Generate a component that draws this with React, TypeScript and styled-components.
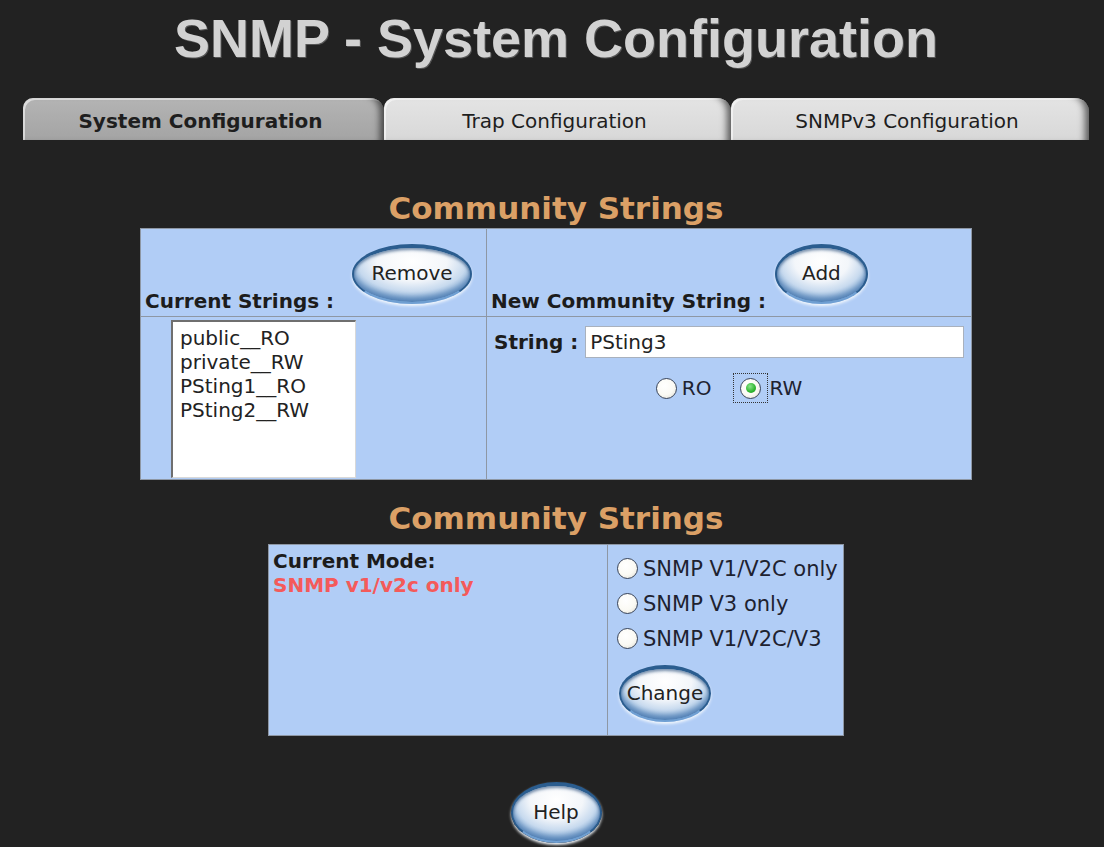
import React from "react";
import styled, { createGlobalStyle } from "styled-components";

const GlobalStyle = createGlobalStyle`
  html, body {
    margin: 0;
    padding: 0;
    background: #222222;
  }
  body {
    font-family: "DejaVu Sans", Verdana, sans-serif;
    color: #1c1c1c;
  }
`;

const Page = styled.div`
  width: 1104px;
  min-height: 847px;
  box-sizing: border-box;
  padding-left: 8px;
  display: flex;
  flex-direction: column;
  align-items: center;
`;

const Title = styled.h1`
  margin: 0;
  height: 98px;
  box-sizing: border-box;
  padding-top: 11px;
  font-family: "Liberation Sans", Arial, sans-serif;
  font-size: 54px;
  line-height: 54px;
  font-weight: bold;
  color: #d2d2d2;
  text-shadow: 1px 1px 0 #555;
`;

const TabBar = styled.div`
  display: flex;
  width: 1066px;
  height: 42px;
`;

const Tab = styled.div<{ $w: number; $active?: boolean }>`
  width: ${(p) => p.$w}px;
  height: 42px;
  display: flex;
  align-items: center;
  justify-content: center;
  box-sizing: border-box;
  padding: 4px 6px 0 0;
  border-top-left-radius: 10px;
  border-top-right-radius: 14px;
  background: ${(p) =>
    p.$active
      ? "linear-gradient(#b4b4b4, #a4a4a4)"
      : "linear-gradient(#e4e4e4, #d8d8d8)"};
  box-shadow: inset -9px 0 7px -5px rgba(0, 0, 0, 0.6),
    inset 2px 2px 0 rgba(255, 255, 255, 0.55);
  font-size: 20px;
  font-weight: ${(p) => (p.$active ? "bold" : "normal")};
  color: #1e1e1e;
`;

const Heading = styled.h2<{ $top: number; $bottom: number }>`
  margin: ${(p) => p.$top}px 0 ${(p) => p.$bottom}px;
  font-size: 31px;
  line-height: 34px;
  font-weight: bold;
  color: #dba066;
`;

const Grid = styled.div<{ $cols: string; $rows: string }>`
  display: grid;
  grid-template-columns: ${(p) => p.$cols};
  grid-template-rows: ${(p) => p.$rows};
  gap: 1px;
  padding: 1px;
  background: #8e97a4;
`;

const Cell = styled.div`
  background: #b1cdf6;
  box-sizing: border-box;
`;

const HeadCell = styled(Cell)<{ $gap: number }>`
  display: flex;
  align-items: flex-end;
  gap: ${(p) => p.$gap}px;
  padding: 0 4px 3px;
`;

const Label = styled.span`
  font-size: 20px;
  line-height: 24px;
  font-weight: bold;
  white-space: nowrap;
`;

const Pill = styled.button<{ $w: number; $h: number; $lift?: number }>`
  width: ${(p) => p.$w}px;
  height: ${(p) => p.$h}px;
  margin-bottom: ${(p) => p.$lift ?? 0}px;
  flex-shrink: 0;
  padding: 0 0 4px;
  border-radius: 50%;
  border: 2px solid #2b5d8f;
  border-top-width: 4px;
  border-bottom-color: #6f9fd2;
  background: radial-gradient(
    ellipse 72% 85% at 50% 25%,
    #ffffff 0%,
    #f3f6fa 42%,
    #c6d9ee 66%,
    #5189c4 100%
  );
  box-shadow: 0 2px 3px #f2f7fc, inset 0 2px 3px rgba(20, 60, 110, 0.55),
    inset 0 -5px 5px rgba(40, 90, 150, 0.45);
  font-family: "DejaVu Sans", Verdana, sans-serif;
  font-size: 20px;
  color: #222;
  cursor: pointer;
`;

const ListCell = styled(Cell)`
  padding: 3px 0 0 30px;
`;

const ListBox = styled.div`
  width: 185px;
  height: 158px;
  box-sizing: border-box;
  background: #fff;
  border-top: 2px solid #6f6f6f;
  border-left: 2px solid #6f6f6f;
  border-right: 1px solid #d8d8d8;
  border-bottom: 1px solid #d8d8d8;
  padding: 4px 0 0 7px;
`;

const ListItem = styled.div`
  font-size: 20px;
  line-height: 24px;
  color: #222;
  white-space: nowrap;
`;

const FormCell = styled(Cell)`
  padding: 9px 7px 0;
`;

const StringRow = styled.div`
  display: flex;
  align-items: center;
  gap: 7px;
`;

const TextBox = styled.input`
  flex: 1;
  height: 32px;
  box-sizing: border-box;
  border: 1px solid #a9b1bd;
  background: #fff;
  padding: 0 4px;
  font-family: "DejaVu Sans", Verdana, sans-serif;
  font-size: 20px;
  color: #222;
  outline: none;
`;

const RadioRow = styled.div`
  display: flex;
  justify-content: center;
  align-items: center;
  gap: 22px;
  margin-top: 15px;
  height: 30px;
`;

const Option = styled.label<{ $h?: number; $fs?: number }>`
  display: flex;
  align-items: center;
  height: ${(p) => p.$h ?? 30}px;
  font-size: ${(p) => p.$fs ?? 20}px;
  color: #1e2230;
  white-space: nowrap;
`;

const DotFrame = styled.span<{ $focus?: boolean }>`
  display: inline-flex;
  align-items: center;
  justify-content: center;
  box-sizing: border-box;
  height: 30px;
  padding: ${(p) => (p.$focus ? "0 6px" : "0")};
  margin-right: ${(p) => (p.$focus ? 1 : 5)}px;
  border-style: dotted;
  border-color: ${(p) => (p.$focus ? "#333" : "transparent")};
  border-width: ${(p) => (p.$focus ? 1 : 0)}px;
`;

const Dot = styled.span<{ $on?: boolean }>`
  width: 21px;
  height: 21px;
  box-sizing: border-box;
  border-radius: 50%;
  border: 1.5px solid #3a4458;
  background: radial-gradient(circle at 40% 35%, #ffffff 0%, #fbfaf4 55%, #dcdad0 100%);
  display: inline-flex;
  align-items: center;
  justify-content: center;
  &::after {
    content: "";
    display: ${(p) => (p.$on ? "block" : "none")};
    width: 10px;
    height: 10px;
    border-radius: 50%;
    background: radial-gradient(circle at 40% 35%, #8be58b 0%, #2fb52f 60%, #1a8a1a 100%);
  }
`;

const ModeCell = styled(Cell)`
  padding: 4px 4px;
`;

const RedText = styled(Label)`
  display: block;
  color: #f45a5a;
`;

const ModeLabel = styled(Label)`
  display: block;
`;

const ChoiceCell = styled(Cell)`
  padding: 6px 0 0 9px;
`;

const ChangeWrap = styled.div`
  margin: 9px 0 0 2px;
`;

const HelpWrap = styled.div`
  margin-top: 46px;
`;

type RadioProps = { label: string; on?: boolean; focus?: boolean; h?: number; fs?: number };

const Radio = ({ label, on, focus, h, fs }: RadioProps) => (
  <Option $h={h} $fs={fs}>
    <DotFrame $focus={focus}>
      <Dot $on={on} />
    </DotFrame>
    {label}
  </Option>
);

const strings = ["public__RO", "private__RW", "PSting1__RO", "PSting2__RW"];

export default function App() {
  return (
    <>
      <GlobalStyle />
      <Page>
        <Title>SNMP - System Configuration</Title>

        <TabBar>
          <Tab $w={361} $active>
            System Configuration
          </Tab>
          <Tab $w={347}>Trap Configuration</Tab>
          <Tab $w={358}>SNMPv3 Configuration</Tab>
        </TabBar>

        <Heading $top={51} $bottom={3}>
          Community Strings
        </Heading>

        <Grid $cols="345px 484px" $rows="87px 162px">
          <HeadCell $gap={18}>
            <Label>Current Strings :</Label>
            <Pill $w={120} $h={60} $lift={9}>
              Remove
            </Pill>
          </HeadCell>
          <HeadCell $gap={9}>
            <Label>New Community String :</Label>
            <Pill $w={93} $h={60} $lift={9}>
              Add
            </Pill>
          </HeadCell>
          <ListCell>
            <ListBox>
              {strings.map((s) => (
                <ListItem key={s}>{s}</ListItem>
              ))}
            </ListBox>
          </ListCell>
          <FormCell>
            <StringRow>
              <Label>String :</Label>
              <TextBox defaultValue="PSting3" />
            </StringRow>
            <RadioRow>
              <Radio label="RO" />
              <Radio label="RW" on focus />
            </RadioRow>
          </FormCell>
        </Grid>

        <Heading $top={21} $bottom={9}>
          Community Strings
        </Heading>

        <Grid $cols="338px 235px" $rows="190px">
          <ModeCell>
            <ModeLabel>Current Mode:</ModeLabel>
            <RedText>SNMP v1/v2c only</RedText>
          </ModeCell>
          <ChoiceCell>
            <Radio label="SNMP V1/V2C only" h={35} fs={21} />
            <Radio label="SNMP V3 only" h={35} fs={21} />
            <Radio label="SNMP V1/V2C/V3" h={35} fs={21} />
            <ChangeWrap>
              <Pill $w={92} $h={57}>
                Change
              </Pill>
            </ChangeWrap>
          </ChoiceCell>
        </Grid>

        <HelpWrap>
          <Pill $w={91} $h={61}>
            Help
          </Pill>
        </HelpWrap>
      </Page>
    </>
  );
}
